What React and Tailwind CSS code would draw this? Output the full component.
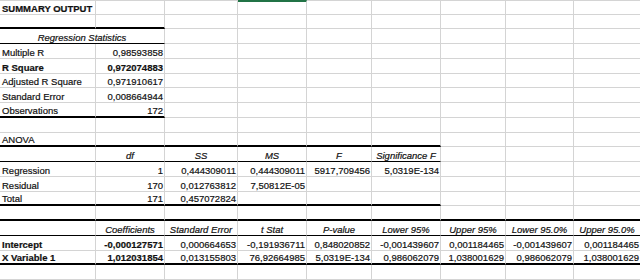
import React from "react";

const W = [
  "w-[96px]",
  "w-[69px]",
  "w-[73px]",
  "w-[69px]",
  "w-[65px]",
  "w-[69px]",
  "w-[65px]",
  "w-[68px]",
  "w-[66px]",
];

const L = (t, b) => ({ t, a: "l", b });
const R = (t, b) => ({ t, a: "r", b });
const C = (t) => ({ t, a: "c", i: true });

const rows = [
  { h: "h-[15px]", cells: [L("SUMMARY OUTPUT", true)], top: true },
  { h: "h-[14px]", bb: "thick", n: 2 },
  { h: "h-[15px]", cells: [{ t: "Regression Statistics", a: "c", i: true, span: true }], bb: "thin", n: 2 },
  { h: "h-[15px]", cells: [L("Multiple R"), R("0,98593858")] },
  { h: "h-[15px]", cells: [L("R Square", true), R("0,972074883", true)] },
  { h: "h-[14px]", cells: [L("Adjusted R Square"), R("0,971910617")] },
  { h: "h-[15px]", cells: [L("Standard Error"), R("0,008664944")] },
  { h: "h-[15px]", cells: [L("Observations"), R("172")], bb: "thick", n: 2 },
  { h: "h-[15px]" },
  { h: "h-[14px]", cells: [L("ANOVA")], bb: "thick", n: 6 },
  { h: "h-[15px]", cells: [L(""), C("df"), C("SS"), C("MS"), C("F"), C("Significance F")], bb: "thin", n: 6 },
  { h: "h-[15px]", cells: [L("Regression"), R("1"), R("0,444309011"), R("0,444309011"), R("5917,709456"), R("5,0319E-134")] },
  { h: "h-[15px]", cells: [L("Residual"), R("170"), R("0,012763812"), R("7,50812E-05")] },
  { h: "h-[14px]", cells: [L("Total"), R("171"), R("0,457072824")], bb: "thick", n: 6 },
  { h: "h-[15px]", bb: "thick", n: 9 },
  {
    h: "h-[15px]",
    cells: [L(""), C("Coefficients"), C("Standard Error"), C("t Stat"), C("P-value"), C("Lower 95%"), C("Upper 95%"), C("Lower 95.0%"), C("Upper 95.0%")],
    bb: "thin",
    n: 9,
  },
  {
    h: "h-[15px]",
    cells: [L("Intercept", true), R("-0,000127571", true), R("0,000664653"), R("-0,191936711"), R("0,848020852"), R("-0,001439607"), R("0,001184465"), R("-0,001439607"), R("0,001184465")],
  },
  {
    h: "h-[14px]",
    cells: [L("X Variable 1", true), R("1,012031854", true), R("0,013155803"), R("76,92664985"), R("5,0319E-134"), R("0,986062079"), R("1,038001629"), R("0,986062079"), R("1,038001629")],
    bb: "thick",
    n: 9,
  },
  { h: "h-[15px]" },
];

function Cell({ w, spec, bb, top, green, last }) {
  const a = spec?.a;
  const align =
    a === "r" ? "justify-end pr-[1px]" : a === "c" ? "justify-center" : "justify-start pl-[2px]";
  const bottom =
    bb === "thick"
      ? "border-b-2 border-b-black"
      : bb === "thin"
      ? "border-b border-b-black"
      : "border-b border-b-[#d4d4d4]";
  const right = last ? "" : "border-r border-r-[#d4d4d4]";
  const t = top ? (green ? "border-t-2 border-t-[#217346]" : "border-t border-t-[#d4d4d4]") : "";
  return (
    <div
      className={`${w} h-full shrink-0 flex items-end whitespace-nowrap overflow-visible ${align} ${bottom} ${right} ${t} ${
        spec?.b ? "font-bold" : ""
      } ${spec?.i ? "italic" : ""}`}
    >
      <span className="leading-[11px]">{spec?.t || ""}</span>
    </div>
  );
}

export default function App() {
  return (
    <div className="w-[640px] h-[280px] overflow-hidden bg-white text-[#111] text-[9.5px] [-webkit-text-stroke:0.2px_#111] font-['Liberation_Sans',Arial,sans-serif]">
      {rows.map((row, ri) => {
        const cells = [];
        let col = 0;
        const specs = row.cells || [];
        let si = 0;
        while (col < 9) {
          const spec = specs[si];
          const inTable = row.bb && col < row.n;
          if (spec && spec.span) {
            cells.push(
              <Cell key={col} w="w-[165px]" spec={spec} bb={inTable ? row.bb : null} top={row.top} />
            );
            col += 2;
          } else {
            cells.push(
              <Cell
                key={col}
                w={W[col]}
                spec={spec}
                bb={inTable ? row.bb : null}
                top={row.top}
                green={col === 3}
                last={col === 8}
              />
            );
            col += 1;
          }
          si += 1;
        }
        return (
          <div key={ri} className={`flex ${row.h}`}>
            {cells}
          </div>
        );
      })}
    </div>
  );
}
